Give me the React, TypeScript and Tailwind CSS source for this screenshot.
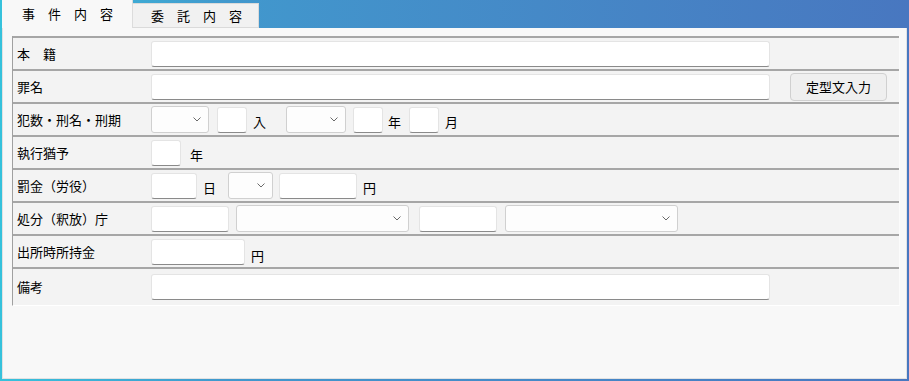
import React from "react";

const Input = ({ w }: { w: number }) => (
  <div
    className="h-[26px] shrink-0 bg-white border border-[#e4e4e4] border-b-[#8a8a8a] rounded-[3px]"
    style={{ width: w }}
  />
);

const Select = ({ w }: { w: number }) => (
  <div
    className="h-[27px] shrink-0 bg-[#fdfdfd] border border-[#d0d0d0] rounded-[3px] flex items-center justify-end pr-[7px]"
    style={{ width: w }}
  >
    <svg width="8" height="5" viewBox="0 0 8 5">
      <path d="M0.5 0.5 L4 4 L7.5 0.5" fill="none" stroke="#6a6a6a" strokeWidth="1" />
    </svg>
  </div>
);

const T = ({ children }: { children: React.ReactNode }) => (
  <span className="text-[13px] leading-none text-black shrink-0">{children}</span>
);

const Row = ({
  label,
  h = 33,
  children,
}: {
  label: string;
  h?: number;
  children?: React.ReactNode;
}) => (
  <div className="flex border-t-2 border-[#a6a6a6]" style={{ height: h }}>
    <div className="w-[138px] shrink-0 flex items-center pl-[4px] text-[13px] text-black whitespace-pre">
      {label}
    </div>
    <div className="flex-1 flex items-center">{children}</div>
  </div>
);

export default function App() {
  return (
    <div className="w-[909px] h-[381px] flex flex-col bg-gradient-to-r from-[#36c2dc] via-[#4198cd] via-25% to-[#4877c0] font-['Noto_Sans_CJK_JP',sans-serif] overflow-hidden">
      {/* tabs */}
      <div className="h-[28px] flex pl-[2px] shrink-0">
        <div className="w-[131px] h-[28px] bg-[#f8f8f8] border-r border-[#dcdcdc] flex items-center pl-[20px] text-[13px] text-black whitespace-pre">
          事　件　内　容
        </div>
        <div className="w-[126px] h-[25px] mt-[3px] bg-[#f1f1f1] border-t border-r border-b border-[#dadada] flex items-center pl-[18px] pt-[1px] text-[13px] text-black whitespace-pre">
          委　託　内　容
        </div>
      </div>
      {/* panel */}
      <div className="flex-1 mx-[2px] mb-[2px] bg-[#f8f8f8] border-l border-r border-b border-[#e2e2e2] pl-[9px] pt-[8px]">
        <div className="w-[888px] bg-[#f3f3f3] border-l border-[#a0a0a0] border-r border-r-[#fbfbfb] border-b border-b-white">
          <Row label={"本　籍"}>
            <Input w={619} />
          </Row>
          <Row label="罪名">
            <Input w={619} />
            <button className="ml-[20px] w-[97px] h-[28px] bg-[#efefef] border border-[#d0d0d0] rounded-[4px] text-[13px] text-black">
              定型文入力
            </button>
          </Row>
          <Row label="犯数・刑名・刑期">
            <Select w={58} />
            <div className="ml-[8px]">
              <Input w={30} />
            </div>
            <div className="ml-[6px]">
              <T>入</T>
            </div>
            <div className="ml-[20px]">
              <Select w={60} />
            </div>
            <div className="ml-[7px]">
              <Input w={30} />
            </div>
            <div className="ml-[5px]">
              <T>年</T>
            </div>
            <div className="ml-[8px]">
              <Input w={30} />
            </div>
            <div className="ml-[6px]">
              <T>月</T>
            </div>
          </Row>
          <Row label="執行猶予">
            <Input w={30} />
            <div className="ml-[9px]">
              <T>年</T>
            </div>
          </Row>
          <Row label="罰金（労役）">
            <Input w={46} />
            <div className="ml-[6px]">
              <T>日</T>
            </div>
            <div className="ml-[12px]">
              <Select w={45} />
            </div>
            <div className="ml-[6px]">
              <Input w={78} />
            </div>
            <div className="ml-[6px]">
              <T>円</T>
            </div>
          </Row>
          <Row label="処分（釈放）庁">
            <Input w={78} />
            <div className="ml-[7px]">
              <Select w={173} />
            </div>
            <div className="ml-[10px]">
              <Input w={78} />
            </div>
            <div className="ml-[8px]">
              <Select w={173} />
            </div>
          </Row>
          <Row label="出所時所持金">
            <Input w={94} />
            <div className="ml-[6px] pt-[4px]">
              <T>円</T>
            </div>
          </Row>
          <Row label="備考" h={38}>
            <Input w={619} />
          </Row>
        </div>
      </div>
    </div>
  );
}
